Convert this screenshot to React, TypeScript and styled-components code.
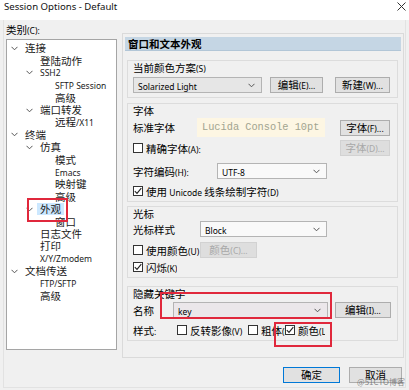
import React from "react";
import styled, { createGlobalStyle } from "styled-components";

const GlobalStyle = createGlobalStyle`
  html, body { margin: 0; padding: 0; background: #f0f0f0; }
  body {
    font-family: "Noto Sans CJK SC", "Noto Sans", sans-serif;
    font-size: 10.5px;
    color: #000;
  }
`;

type TreeItem = { level: number; label: string; open?: boolean; selected?: boolean };

const tree: TreeItem[] = [
  { level: 0, label: "连接", open: true },
  { level: 1, label: "登陆动作" },
  { level: 1, label: "SSH2", open: true },
  { level: 2, label: "SFTP Session" },
  { level: 2, label: "高级" },
  { level: 1, label: "端口转发", open: true },
  { level: 2, label: "远程/X11" },
  { level: 0, label: "终端", open: true },
  { level: 1, label: "仿真", open: true },
  { level: 2, label: "模式" },
  { level: 2, label: "Emacs" },
  { level: 2, label: "映射键" },
  { level: 2, label: "高级" },
  { level: 1, label: "外观", open: true, selected: true },
  { level: 2, label: "窗口" },
  { level: 1, label: "日志文件" },
  { level: 1, label: "打印" },
  { level: 1, label: "X/Y/Zmodem" },
  { level: 0, label: "文档传送", open: true },
  { level: 1, label: "FTP/SFTP" },
  { level: 1, label: "高级" },
];

// the dialog font draws latin letters much smaller than the chinese ones
const CJK = /([\u2e80-\u9fff\uff00-\uffef]+)/;
const Txt = ({ children }: { children: string }) => (
  <>
    {children.split(CJK).map((part, i) =>
      part === "" ? null : i % 2 === 1 ? part : <Lat key={i}>{part}</Lat>
    )}
  </>
);

const Chevron = () => (
  <svg width="7" height="5" viewBox="0 0 7 5">
    <polyline points="0.5,0.8 3.5,3.8 6.5,0.8" fill="none" stroke="#555" strokeWidth="1" />
  </svg>
);

const Check = () => (
  <svg width="8" height="8" viewBox="0 0 8 8">
    <polyline points="0.8,4.2 3,6.4 7.3,1.2" fill="none" stroke="#222" strokeWidth="1.1" />
  </svg>
);

const CheckBox = ({ label, checked, width }: { label: string; checked?: boolean; width?: number }) => (
  <CheckWrap $width={width}>
    <Box>{checked && <Check />}</Box>
    <span><Txt>{label}</Txt></span>
  </CheckWrap>
);

const Combo = ({ value, width, tone }: { value: string; width: number; tone?: string }) => (
  <ComboBox $width={width} $tone={tone}>
    <span><Txt>{value}</Txt></span>
    <Chevron />
  </ComboBox>
);

export default function App() {
  return (
    <Window>
      <GlobalStyle />
      <TitleBar>
        <span>Session Options - Default</span>
        <svg width="9" height="9" viewBox="0 0 9 9">
          <path d="M0.5 0.5 L8.5 8.5 M8.5 0.5 L0.5 8.5" stroke="#333" strokeWidth="1" />
        </svg>
      </TitleBar>
      <Frame>
        <Main>
          <LeftCol>
            <CategoryLabel><Txt>类别(C):</Txt></CategoryLabel>
            <Tree>
              {tree.map((t, i) => (
                <TreeRow key={i} $level={t.level}>
                  <ChevronSlot>{t.open && <Chevron />}</ChevronSlot>
                  <TreeText $selected={t.selected}><Txt>{t.label}</Txt></TreeText>
                </TreeRow>
              ))}
            </Tree>
          </LeftCol>

          <Panel>
            <PanelHeader>窗口和文本外观</PanelHeader>

            <Group $h={38} $mt={9}>
              <GroupLabel $mt={0}><Txt>当前颜色方案(S)</Txt></GroupLabel>
              <Row $h={16} $mt={3}>
                <Combo value="Solarized Light" width={129} tone="#e6e6e6" />
                <Button $width={53} $ml={8}><Txt>编辑(E)...</Txt></Button>
                <Button $width={55} $ml={12}><Txt>新建(W)...</Txt></Button>
              </Row>
            </Group>

            <Group $h={99} $mt={5}>
              <GroupLabel $mt={0}>字体</GroupLabel>
              <Row $h={19} $mt={1}>
                <FieldLabel $width={64}>标准字体</FieldLabel>
                <FontPreview>Lucida Console 10pt</FontPreview>
                <Button $width={50} $ml="auto"><Txt>字体(F)...</Txt></Button>
              </Row>
              <Row $h={16} $mt={3}>
                <CheckBox label="精确字体(A):" />
                <Button $width={50} $ml="auto" disabled><Txt>字体(D)...</Txt></Button>
              </Row>
              <Row $h={16} $mt={7}>
                <FieldLabel $width={84}><Txt>字符编码(H):</Txt></FieldLabel>
                <Combo value="UTF-8" width={110} tone="#f9f9f9" />
              </Row>
              <Row $h={14} $mt={5}>
                <CheckBox label="使用 Unicode 线条绘制字符(D)" checked />
              </Row>
            </Group>

            <Group $h={72} $mt={4}>
              <GroupLabel $mt={0}>光标</GroupLabel>
              <Row $h={16} $mt={1}>
                <FieldLabel $width={67}>光标样式</FieldLabel>
                <Combo value="Block" width={127} tone="#f9f9f9" />
              </Row>
              <Row $h={16} $mt={5}>
                <CheckBox label="使用颜色(U)" width={67} />
                <Button $width={57} disabled><Txt>颜色(C)...</Txt></Button>
              </Row>
              <Row $h={14} $mt={2}>
                <CheckBox label="闪烁(K)" checked />
              </Row>
            </Group>

            <Group $h={55} $mt={8}>
              <GroupLabel $mt={0}>隐藏关键字</GroupLabel>
              <Row $h={16} $mt={2}>
                <FieldLabel $width={40}>名称</FieldLabel>
                <Combo value="key" width={155} tone="#ebe7ea" />
                <Button $width={56} $ml={7}><Txt>编辑(I)...</Txt></Button>
              </Row>
              <Row $h={16} $mt={4}>
                <FieldLabel $width={44}><Txt>样式:</Txt></FieldLabel>
                <CheckBox label="反转影像(V)" width={71} />
                <CheckBox label="粗体(B)" width={37} />
                <CheckBox label="颜色(L)" checked width={40} />
              </Row>
            </Group>
          </Panel>
        </Main>

        <Footer>
          <Button $width={57} $primary>确定</Button>
          <Button $width={53}>取消</Button>
        </Footer>
      </Frame>

      <Mark $x={27} $y={198} $w={41} $h={24} />
      <Mark $x={160} $y={292} $w={172} $h={27} />
      <Mark $x={274} $y={322} $w={58} $h={25} />
      <Watermark>@51CTO博客</Watermark>
    </Window>
  );
}

const Window = styled.div`
  position: relative;
  width: 409px;
  height: 390px;
  overflow: hidden;
  background: #f0f0f0;
  display: flex;
  flex-direction: column;
`;

const Lat = styled.span`
  font-family: "Noto Sans", sans-serif;
  font-size: 8.5px;
`;

const TitleBar = styled.div`
  height: 20px;
  box-sizing: border-box;
  background: #fff;
  display: flex;
  justify-content: space-between;
  align-items: flex-start;
  padding: 0 3px 0 4px;
  font-family: "Noto Sans", sans-serif;
  font-size: 9.6px;
  line-height: 14px;
  color: #111;

  svg { margin-top: 2px; }
`;

const Frame = styled.div`
  margin: 0 3px;
  height: 368px;
  box-sizing: border-box;
  border: 1px solid #e2e2e2;
  border-top: none;
  display: flex;
  flex-direction: column;
`;

const Main = styled.div`
  display: flex;
  height: 338px;
`;

const LeftCol = styled.div`
  width: 113px;
  padding-left: 2px;
  box-sizing: border-box;
`;

const CategoryLabel = styled.div`
  margin-top: 3px;
  line-height: 14px;
  height: 14px;
`;

const Tree = styled.div`
  margin-top: 2px;
  height: 311px;
  box-sizing: border-box;
  border: 1px solid #a5a5a5;
  background: #fff;
  padding-top: 2px;
`;

const TreeRow = styled.div<{ $level: number }>`
  display: flex;
  align-items: center;
  height: 12.4px;
  padding-left: ${(p) => 1 + p.$level * 15}px;
  white-space: nowrap;
  color: #1a1a1a;
`;

const ChevronSlot = styled.span`
  width: 12px;
  height: 12px;
  flex: none;
  display: flex;
  align-items: center;
  justify-content: center;
  margin-right: 5px;
`;

const TreeText = styled.span<{ $selected?: boolean }>`
  line-height: 12px;
  padding: 0 3px;
  margin-left: -3px;
  background: ${(p) => (p.$selected ? "#cce8ff" : "transparent")};
`;

const Panel = styled.div`
  margin-left: 5px;
  margin-top: 13px;
  width: 282px;
  height: 325px;
  box-sizing: border-box;
  border: 1px solid #dadada;
  padding: 3px 2px 0;
  display: flex;
  flex-direction: column;
`;

const PanelHeader = styled.div`
  height: 14px;
  line-height: 14px;
  background: #c5d6e4;
  border-bottom: 1px solid #b2c6d7;
  box-sizing: border-box;
  padding-left: 3px;
  font-weight: bold;
`;

const Group = styled.div<{ $h: number; $mt: number }>`
  height: ${(p) => p.$h}px;
  margin: ${(p) => p.$mt}px 3px 0 2px;
  box-sizing: border-box;
  border: 1px solid #dcdcdc;
  padding: 0 7px 0 5px;
  display: flex;
  flex-direction: column;
`;

const GroupLabel = styled.div<{ $mt: number }>`
  margin-top: ${(p) => p.$mt}px;
  height: 13px;
  line-height: 13px;
`;

const Row = styled.div<{ $h: number; $mt: number }>`
  display: flex;
  align-items: center;
  height: ${(p) => p.$h}px;
  margin-top: ${(p) => p.$mt}px;
  white-space: nowrap;
`;

const FieldLabel = styled.span<{ $width: number }>`
  width: ${(p) => p.$width}px;
  flex: none;
`;

const ComboBox = styled.div<{ $width: number; $tone?: string }>`
  width: ${(p) => p.$width}px;
  height: 16px;
  flex: none;
  box-sizing: border-box;
  border: 1px solid #b4b4b4;
  background: ${(p) => p.$tone || "#f9f9f9"};
  display: flex;
  align-items: center;
  justify-content: space-between;
  padding: 0 6px 0 4px;
`;

const Button = styled.button<{ $width: number; $ml?: number | "auto"; $primary?: boolean }>`
  width: ${(p) => p.$width}px;
  height: 16px;
  flex: none;
  margin: 0 0 0 ${(p) => (p.$ml === "auto" ? "auto" : `${p.$ml || 0}px`)};
  padding: 0;
  box-sizing: border-box;
  font: inherit;
  font-size: 10.5px;
  line-height: 14px;
  color: #000;
  background: #e1e1e1;
  border: 1px solid ${(p) => (p.$primary ? "#0078d7" : "#adadad")};

  &:disabled {
    color: #a8a8a8;
    background: #dedede;
    border-color: #d2d2d2;
  }
`;

const FontPreview = styled.div`
  width: 128px;
  height: 19px;
  flex: none;
  box-sizing: border-box;
  background: #fdf6e3;
  color: #a1a48f;
  padding-left: 5px;
  font-family: "Liberation Mono", "DejaVu Sans Mono", monospace;
  font-size: 10.3px;
  line-height: 19px;
`;

const CheckWrap = styled.label<{ $width?: number }>`
  display: flex;
  align-items: center;
  gap: 3px;
  flex: none;
  width: ${(p) => (p.$width ? `${p.$width}px` : "auto")};
  overflow: hidden;
  white-space: nowrap;
  background: #f0f0f0;
`;

const Box = styled.span`
  width: 10px;
  height: 10px;
  flex: none;
  box-sizing: border-box;
  border: 1px solid #333;
  background: #fff;
  display: flex;
  align-items: center;
  justify-content: center;
`;

const Footer = styled.div`
  display: flex;
  justify-content: flex-end;
  gap: 9px;
  padding: 9px 3px 0 0;
`;

const Mark = styled.div<{ $x: number; $y: number; $w: number; $h: number }>`
  position: absolute;
  left: ${(p) => p.$x}px;
  top: ${(p) => p.$y}px;
  width: ${(p) => p.$w}px;
  height: ${(p) => p.$h}px;
  box-sizing: border-box;
  border: 2px solid #e0283c;
  pointer-events: none;
`;

const Watermark = styled.div`
  position: absolute;
  right: 4px;
  top: 377px;
  font-size: 8px;
  line-height: 10px;
  color: rgba(100, 100, 100, 0.75);
  pointer-events: none;
`;
